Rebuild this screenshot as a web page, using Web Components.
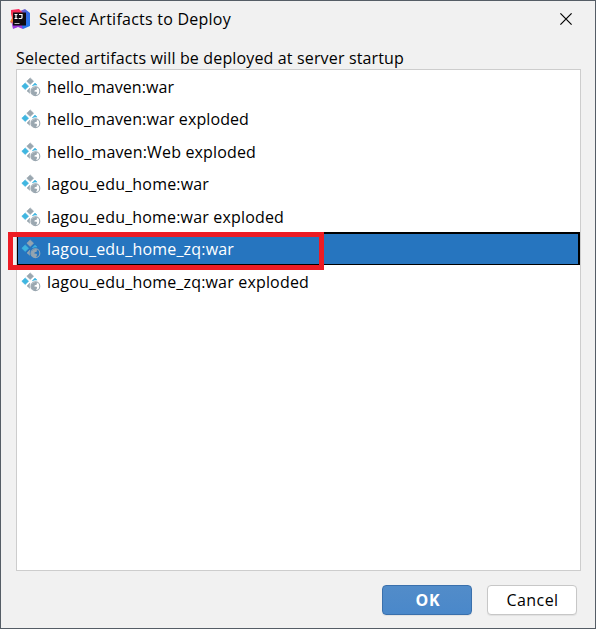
<!DOCTYPE html>
<html lang="en"><head><meta charset="utf-8"><title>Select Artifacts to Deploy</title>
<style>
html,body{margin:0;height:100%;overflow:hidden}
body{font:16px/22px "Open Sans","Noto Sans",sans-serif;color:#000}
</style></head><body>
<artifact-dialog></artifact-dialog>
<script>
const define=(name,html,init)=>{
  const t=document.createElement('template');t.innerHTML=html;
  customElements.define(name,class extends HTMLElement{
    constructor(){super();this.attachShadow({mode:'open'}).append(t.content.cloneNode(true));}
    connectedCallback(){if(init)init(this,this.shadowRoot);}
  });
};

/* Text run that spreads its letters to occupy a given width. */
define('fit-text',`<style>:host{display:inline-block;white-space:pre}span{display:inline-block}</style><span></span>`,(el,root)=>{
  const s=root.querySelector('span');s.textContent=el.getAttribute('text');
  const w=+el.getAttribute('width');
  s.style.letterSpacing=((w-s.getBoundingClientRect().width)/s.textContent.length)+'px';
});

define('app-logo',`<style>:host{display:block;width:20px;height:20px}svg{display:block}</style>
<svg width="20" height="20" viewBox="0 0 20 20">
<defs><linearGradient id="a" x1="0" y1="0" x2="0" y2="1"><stop stop-color="#f8255e"/><stop offset=".45" stop-color="#fb4a45"/><stop offset=".62" stop-color="#fc9028"/><stop offset=".8" stop-color="#b63ac6"/></linearGradient>
<linearGradient id="b" x1="0" y1="0" x2="1" y2="1"><stop stop-color="#b543a8"/><stop offset=".45" stop-color="#3969e5"/><stop offset="1" stop-color="#1b7cf0"/></linearGradient></defs>
<path d="M10 2 15 0l5 4v13l-7 3-5-4z" fill="url(#b)"/>
<path d="M1 1 9 0l5 5-2 12-9 2-.5-4L0 13l2-4-1-4z" fill="url(#a)"/>
<path d="M2 15h9l2 5-5-2-5 2z" fill="#9b39de"/>
<rect x="3" y="3.5" width="13" height="13" fill="#100b12"/>
<path d="M4.5 5.5h3M6 5.5v4M4.5 9.5h3M9 5.5h3v3q0 1-1.2 1H8.7" stroke="#fff" stroke-width="1.2" fill="none"/>
<path d="M4.5 14.5h5" stroke="#bbb" stroke-width="1"/></svg>`);

define('artifact-icon',`<style>:host{display:block;width:20px;height:20px;flex:none}svg{display:block}</style>
<svg width="20" height="20" viewBox="0 0 20 20">
<g stroke-linejoin="round" stroke-width=".6">
<path d="M9.2.9 12.6 4.2 9.2 7.5 5.8 4.2z" fill="#9aa7b0" stroke="#9aa7b0"/>
<path d="M4.2 5.9 7.6 9.2 4.2 12.5.8 9.2z" fill="#40b6e0" stroke="#40b6e0"/>
<path d="m14 6.1 2 2q-2.900-.4-4.700.7z" fill="#40b6e0" stroke="#40b6e0"/>
<path d="m8.800 11.100q-.7 2.600.1 5.200L6 14z" fill="#9aa7b0" stroke="#9aa7b0"/></g>
<circle cx="14.4" cy="14.2" r="4.4" fill="none" stroke="#9aa7b0" stroke-width="1.1"/>
<path d="M10.3 12.5q2-3 5-2.500l1.300 1-1 .8.2.9-2 .6-.5 1.200 2.200.3.7 1-1.400 2.600q-4.500.2-4.800-4.300z" fill="#9aa7b0"/></svg>`);

define('artifact-row',`<style>:host{display:flex;align-items:center;box-sizing:border-box;height:32.5px;padding:1px 0 0 4px;gap:6px}
:host([selected]){height:33px;margin-top:-.5px;padding:0 0 0 3px;background:#2675bf;color:#fff;border:solid #000;border-width:2px 2px 1px 1px}
:host([selected]) artifact-icon{opacity:.95}
slot{display:block}</style><artifact-icon></artifact-icon><slot></slot>`);

define('artifact-list',`<style>:host{display:block;box-sizing:border-box;height:502px;background:#fff;border:1px solid #cdcdcd}</style><slot></slot>`);

define('dialog-button',`<style>:host{display:flex;align-items:center;justify-content:center;box-sizing:border-box;width:90px;height:30px;padding-left:1px;background:#fff;border:1px solid #c7c7c7;border-radius:4px;box-shadow:0 1px 1px #0001}
:host([primary]){background:linear-gradient(#528cc9,#4a88ca);color:#fff;border-color:#3a70ac;font-weight:700;padding-left:2px}</style><slot></slot>`);

define('highlight-frame',`<style>:host{display:block;position:absolute;left:7px;top:231px;width:316px;height:38px;box-sizing:border-box;border:5px solid #ed1c24}</style>`);

define('artifact-dialog',`<style>
:host{display:flex;flex-direction:column;position:relative;box-sizing:border-box;width:596px;height:629px;background:#f1f1f1;border:1px solid #555d66;padding:0 14px 0 15px}
header{display:flex;align-items:center;height:36px;margin-left:-6px}
header fit-text{margin-left:9px}
.x{margin:0 9px 0 auto;display:block}
.label{height:32px;padding-top:10px;box-sizing:border-box}
footer{display:flex;justify-content:flex-end;gap:15px;margin:14px 4px 0}
</style>
<header><app-logo></app-logo><fit-text text="Select Artifacts to Deploy" width="192"></fit-text>
<svg class="x" width="12" height="12" viewBox="0 0 12 12"><path d="M.4.4l11.2 11.2M11.6.4L.4 11.6" stroke="#000" stroke-width="1.2"/></svg></header>
<div class="label"><fit-text text="Selected artifacts will be deployed at server startup" width="388"></fit-text></div>
<artifact-list>
<artifact-row><fit-text text="hello_maven:war" width="127"></fit-text></artifact-row>
<artifact-row><fit-text text="hello_maven:war exploded" width="202"></fit-text></artifact-row>
<artifact-row><fit-text text="hello_maven:Web exploded" width="209"></fit-text></artifact-row>
<artifact-row><fit-text text="lagou_edu_home:war" width="162"></fit-text></artifact-row>
<artifact-row><fit-text text="lagou_edu_home:war exploded" width="237"></fit-text></artifact-row>
<artifact-row selected><fit-text text="lagou_edu_home_zq:war" width="187"></fit-text></artifact-row>
<artifact-row><fit-text text="lagou_edu_home_zq:war exploded" width="262"></fit-text></artifact-row>
</artifact-list>
<footer><dialog-button primary><fit-text text="OK" width="25"></fit-text></dialog-button><dialog-button><fit-text text="Cancel" width="52"></fit-text></dialog-button></footer>
<highlight-frame></highlight-frame>`);
</script></body></html>
